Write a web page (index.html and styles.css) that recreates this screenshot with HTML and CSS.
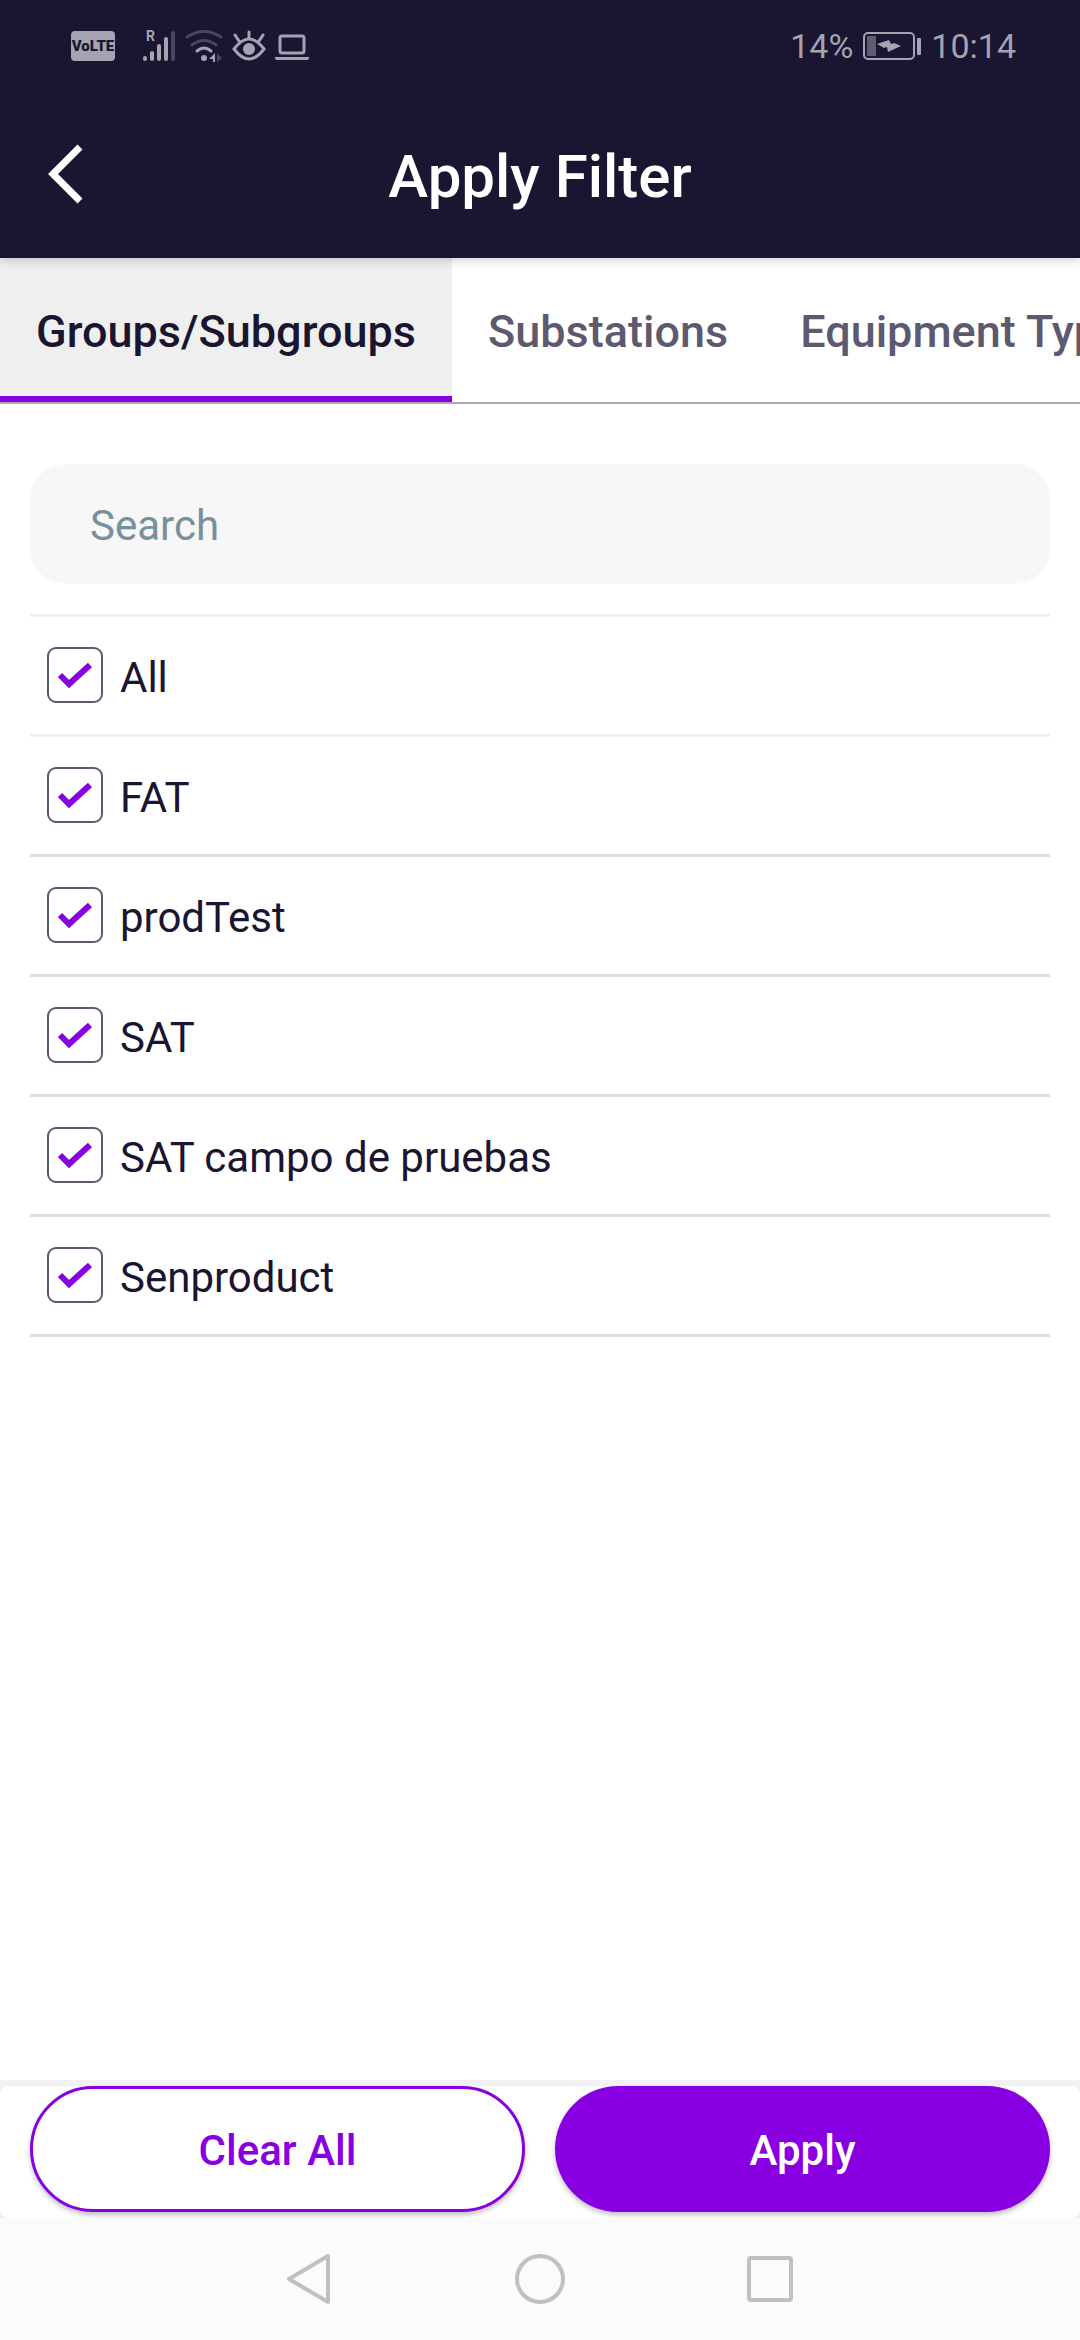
FILE: index.html
```html
<!DOCTYPE html>
<html lang="en">
<head>
    <meta charset="UTF-8">
    <meta name="viewport" content="width=device-width, initial-scale=1.0">
    <title>Apply Filter</title>
    <link rel="stylesheet" href="styles.css">
</head>
<body>
    <header class="header">
        <div class="status-bar">
            <div class="status-left">
                <span class="volte">VoLTE</span>
                <svg class="signal" width="34" height="34" viewBox="0 0 34 34">
                    <text x="4" y="12">R</text>
                    <g stroke="#a5a2b2" stroke-width="4" stroke-linecap="round">
                        <path d="M3 29v1M10 24v6M17 17v13M24 10v20"/>
                        <path d="M31 4v26" stroke="#4a4560"/>
                    </g>
                </svg>
                <svg class="wifi" width="38" height="34" viewBox="0 0 38 34">
                    <g fill="none" stroke-width="3" stroke-linecap="round">
                        <path d="M2 8q17-11 34 0" stroke="#4a4560"/>
                        <path d="M7 16q12-9 24 0" stroke="#4a4560"/>
                        <path d="M12 22q7-6 14 0" stroke="#a5a2b2"/>
                    </g>
                    <circle cx="19" cy="29" r="3" fill="#a5a2b2"/>
                    <path d="M30 24v9h-2v-3h-4z" fill="#a5a2b2"/>
                    <path d="M32 24v9l5-4z" fill="#4a4560"/>
                </svg>
                <svg class="eye" width="34" height="34" viewBox="0 0 34 34">
                    <g fill="none" stroke="#a5a2b2" stroke-width="3" stroke-linecap="round">
                        <path d="M2 20q15-20 30 0-15 20-30 0z"/>
                        <path d="M17 9V3M7 12 3 6M27 12l4-6"/>
                    </g>
                    <circle cx="17" cy="20" r="6" fill="#a5a2b2"/>
                </svg>
                <svg class="laptop" width="34" height="34" viewBox="0 0 34 34">
                    <rect x="5" y="7" width="24" height="17" rx="2" fill="none" stroke="#a5a2b2" stroke-width="3"/>
                    <path d="M0 28h34v1q0 2-3 2H3q-3 0-3-2z" fill="#a5a2b2"/>
                </svg>
            </div>
            <div class="status-right">
                <span>14%</span>
                <svg width="58" height="28" viewBox="0 0 58 28">
                    <rect x="1" y="1" width="50" height="26" rx="4" fill="none" stroke="#a5a2b2" stroke-width="2"/>
                    <rect x="4" y="4" width="9" height="20" fill="#5f5b72"/>
                    <path d="M14 12 26 8l2 4 3-1 7 3-13 6-1-5-3 1z" fill="#a5a2b2"/>
                    <rect x="54" y="6" width="4" height="17" rx="1" fill="#a5a2b2"/>
                </svg>
                <span>10:14</span>
            </div>
        </div>
        <div class="title-bar">
            <button class="back" aria-label="Back">
                <svg width="36" height="60" viewBox="0 0 36 60">
                    <path d="M32 3 5 30l27 27" fill="none" stroke="#fff" stroke-width="7"/>
                </svg>
            </button>
            <h1>Apply Filter</h1>
        </div>
    </header>

    <nav class="tabs">
        <button class="tab active">Groups/Subgroups</button>
        <button class="tab">Substations</button>
        <button class="tab">Equipment Type</button>
    </nav>

    <main class="content">
        <input class="search" type="text" placeholder="Search" aria-label="Search">
        <ul class="list">
            <li class="light"><label><input type="checkbox" checked><span>All</span></label></li>
            <li><label><input type="checkbox" checked><span>FAT</span></label></li>
            <li><label><input type="checkbox" checked><span>prodTest</span></label></li>
            <li><label><input type="checkbox" checked><span>SAT</span></label></li>
            <li><label><input type="checkbox" checked><span>SAT campo de pruebas</span></label></li>
            <li><label><input type="checkbox" checked><span>Senproduct</span></label></li>
        </ul>
    </main>

    <footer class="actions">
        <div class="actions-row">
            <button class="btn btn-outline" id="clear">Clear All</button>
            <button class="btn btn-fill">Apply</button>
        </div>
    </footer>

    <nav class="system-nav">
        <button aria-label="Back">
            <svg width="50" height="50" viewBox="0 0 50 50">
                <path d="M42 2v46L3 25z"/>
            </svg>
        </button>
        <button aria-label="Home">
            <svg width="50" height="50" viewBox="0 0 50 50">
                <circle cx="25" cy="25" r="23"/>
            </svg>
        </button>
        <button aria-label="Recent apps">
            <svg width="50" height="50" viewBox="0 0 50 50">
                <rect x="5" y="4" width="42" height="42" rx="2"/>
            </svg>
        </button>
    </nav>

    <script>
        // Clear every checkbox in the list
        document.getElementById('clear').addEventListener('click', () => {
            document.querySelectorAll('.list input').forEach((box) => {
                box.checked = false;
            });
        });
    </script>
</body>
</html>
```
FILE: styles.css
```css
* {
    box-sizing: border-box;
}
body {
    font-family: Roboto, sans-serif;
    display: flex;
    flex-direction: column;
    min-height: 100vh;
    margin: 0;
    background-color: #fff;
    color: #1a1530;
}
button {
    font-family: inherit;
    padding: 0;
    border: none;
    background: none;
    cursor: pointer;
}
svg {
    display: block;
}
.header {
    position: relative;
    z-index: 1;
    background-color: #1a1530;
    box-shadow: 0 2px 10px rgba(0, 0, 0, 0.2);
}
.status-bar {
    display: flex;
    justify-content: space-between;
    align-items: center;
    height: 92px;
    padding: 0 64px 0 71px;
    color: #a5a2b2;
}
.status-left,
.status-right {
    display: flex;
    align-items: center;
}
.status-left {
    gap: 9px;
}
.status-right {
    gap: 10px;
    font-size: 34px;
}
.signal text {
    fill: #a5a2b2;
    font-size: 14px;
    font-weight: 700;
}
.volte {
    width: 44px;
    margin-right: 18px;
    border-radius: 4px;
    background-color: #a5a2b2;
    color: #1a1530;
    font-size: 15px;
    font-weight: 900;
    line-height: 30px;
    text-align: center;
}
.title-bar {
    display: grid;
    grid-template-columns: 132px 1fr 132px;
    align-items: center;
    height: 166px;
    padding-bottom: 3px;
}
.back {
    justify-self: start;
    margin-left: 48px;
}
.title-bar h1 {
    margin: 0;
    padding-top: 6px;
    color: #fff;
    font-size: 60px;
    font-weight: 500;
    text-align: center;
}
.tabs {
    display: flex;
    overflow: hidden;
    border-bottom: 2px solid #aaa8b8;
}
.tab {
    flex: none;
    height: 144px;
    padding: 8px 36px 0;
    border-bottom: 6px solid transparent;
    color: #5d596e;
    font-size: 45px;
    font-weight: 500;
}
.tab.active {
    border-bottom-color: #8800e2;
    background-color: #efefef;
    color: #1a1530;
}
.content {
    flex: 1;
    padding: 60px 30px;
}
.search {
    display: block;
    width: 100%;
    height: 120px;
    padding: 2px 60px 0;
    border: none;
    border-radius: 36px;
    background-color: #f7f7f7;
    font-family: inherit;
    font-size: 42px;
}
.search::placeholder {
    color: #78909c;
}
.list {
    list-style: none;
    margin: 30px 0 0;
    padding: 0;
    border-top: 3px solid #f0f0f0;
}
.list li {
    height: 120px;
    border-bottom: 3px solid #e0e0e0;
}
.list li.light {
    border-bottom-color: #f0f0f0;
}
.list label {
    display: flex;
    align-items: center;
    gap: 17px;
    height: 100%;
    padding: 0 0 2px 17px;
    font-size: 42px;
}
.list span {
    padding-top: 6px;
}
.list input {
    appearance: none;
    width: 56px;
    height: 56px;
    margin: 0;
    border: 2px solid #5d596e;
    border-radius: 9px;
}
.list input:checked {
    background: url("data:image/svg+xml,%3Csvg xmlns='http://www.w3.org/2000/svg' viewBox='0 0 52 52'%3E%3Cpath d='M11 26l9 9 21-19' fill='none' stroke='%238800e2' stroke-width='6'/%3E%3C/svg%3E") center / 100% no-repeat;
}
.actions {
    padding-top: 6px;
    background-color: #f2f2f2;
}
.actions-row {
    display: grid;
    grid-template-columns: 1fr 1fr;
    gap: 30px;
    padding: 0 30px 6px;
    border-radius: 9px;
    background-color: #fff;
}
.btn {
    height: 126px;
    padding-top: 2px;
    border-radius: 63px;
    box-shadow: 0 3px 5px rgba(0, 0, 0, 0.25);
    font-size: 42px;
    font-weight: 500;
}
.btn-outline {
    border: 3px solid #8800e2;
    background-color: #fff;
    color: #8800e2;
}
.btn-fill {
    background-color: #8800e2;
    color: #fff;
}
.system-nav {
    display: flex;
    justify-content: center;
    align-items: center;
    gap: 179px;
    height: 122px;
    background-color: #fbfbfb;
}
.system-nav svg {
    fill: none;
    stroke: #c0c0c0;
    stroke-width: 4;
    stroke-linejoin: round;
}
```
